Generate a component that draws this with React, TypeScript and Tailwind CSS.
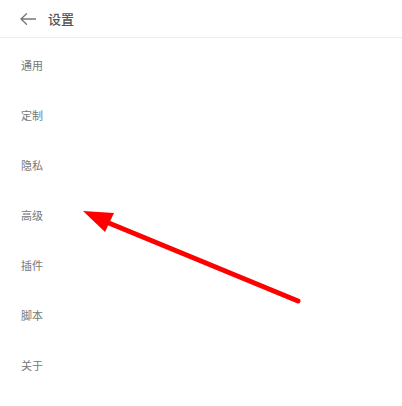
const items = ['通用', '定制', '隐私', '高级', '插件', '脚本', '关于']

export default function App() {
  return (
    <div className="relative w-[402px] h-[406px] bg-white overflow-hidden font-['Noto_Sans_CJK_SC',sans-serif]">
      <div className="flex items-center h-[38px] border-b border-[#eeeeee] pl-[20px]">
        <svg width="16" height="12" viewBox="0 0 16 12" fill="none" stroke="#777" strokeWidth="1.3" strokeLinecap="round" strokeLinejoin="round">
          <path d="M15.5 6H1M6.5 0.8L1 6l5.5 5.2" />
        </svg>
        <span className="ml-[12px] text-[13px] text-[#555] font-medium">设置</span>
      </div>
      <div className="flex flex-col pt-[2px]">
        {items.map((t) => (
          <div key={t} className="h-[50px] flex items-center pl-[21px] text-[11px] text-[#777]">
            {t}
          </div>
        ))}
      </div>

      {/* 标注箭头 */}
      <svg className="absolute left-0 top-0" width="402" height="406" viewBox="0 0 402 406">
        <line x1="298" y1="301" x2="104" y2="221" stroke="#f00" strokeWidth="5" strokeLinecap="round" />
        <polygon points="83,211 114,213 105,232" fill="#f00" />
      </svg>
    </div>
  )
}
